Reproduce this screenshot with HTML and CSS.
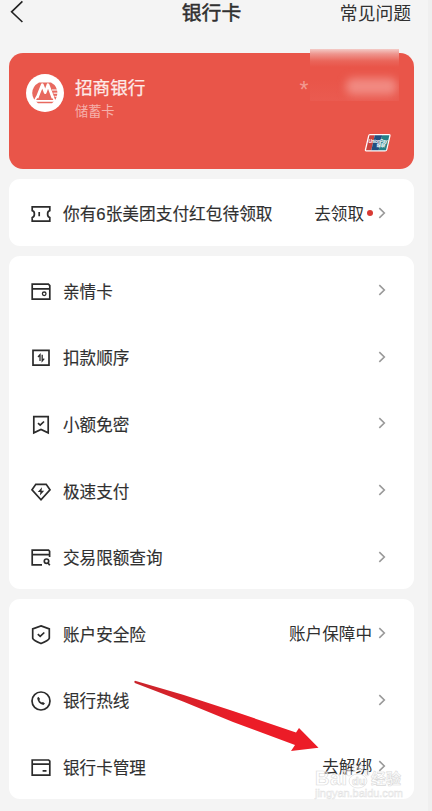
FILE: index.html
```html
<!DOCTYPE html>
<html lang="zh-CN">
<head>
<meta charset="utf-8">
<title>银行卡</title>
<link rel="stylesheet" href="styles.css">
</head>
<body>
<svg class="defs" width="0" height="0" aria-hidden="true">
  <symbol id="chevron" viewBox="0 0 8 12"><path d="M1.3 1.2 6.3 6 1.3 10.8"/></symbol>
</svg>
<main class="page">
  <header class="topbar">
    <svg class="back" viewBox="0 0 14 24"><path d="M12.4 1.4 1.6 11.8 12.4 22"/></svg>
    <h1 class="title">银行卡</h1>
    <a class="faq">常见问题</a>
  </header>

  <section class="bank-card">
    <svg class="bank-logo" viewBox="0 0 38 38">
      <circle cx="19" cy="19" r="19" fill="#fff"/>
      <path d="M13 8.4H25Q31.4 12 31.4 19 31 25.5 26 29.2H12Q6.4 25 6.2 19 6.5 12 13 8.4Z" fill="#e8695f"/>
      <path d="M11 24 16.3 10.8 19.2 18.6 22 10.8 27 24" class="logo-line"/>
      <path d="M11 22.5 8.6 26.9H28.8L26.6 22.5" class="logo-base"/>
      <path d="M26 16H33M27.5 19.2H33M28.5 22.4H33" class="logo-bar"/>
    </svg>
    <div class="bank-info">
      <div class="bank-name">招商银行</div>
      <div class="bank-type">储蓄卡</div>
    </div>
    <span class="mask-star">*</span>
    <div class="mask"><i class="mask-glow"></i></div>
    <svg class="unionpay" viewBox="0 0 28 20">
      <path d="M6 1H25.2Q27 1 26.6 2.8L23.4 16.6Q23 18.5 21 18.5H2.2Q.4 18.5.8 16.7L4 2.9Q4.4 1 6 1Z" fill="#fff"/>
      <path d="M5.5 2.3H10.8L7.3 17.2H2Z" fill="#c9433f"/>
      <path d="M10.8 2.3H18.2L14.7 17.2H7.3Z" fill="#224f80"/>
      <path d="M18.2 2.3H25.4L22 17.2H14.7Z" fill="#258087"/>
      <text x="4.5" y="10" class="up-text" textLength="19">UnionPay</text>
      <text x="12" y="14.2" class="up-text" textLength="9">银联</text>
    </svg>
  </section>

  <section class="group coupon">
    <div class="row">
      <svg class="icon" viewBox="0 0 20 20"><path d="M1.2 2.8H18.8V6.6Q16.6 7 16.6 10T18.8 13.6V17.2H1.2V13.6Q3.4 13 3.4 10T1.2 6.6ZM8.2 8V12.2"/></svg>
      <span class="label">你有6张美团支付红包待领取</span>
      <span class="value">去领取</span><i class="dot"></i>
      <svg class="chevron"><use href="#chevron"/></svg>
    </div>
  </section>

  <section class="group">
    <div class="row">
      <svg class="icon" viewBox="0 0 20 20"><path d="M1.2 2.2H17.4L18.8 3.6V17.2H1.2ZM1.2 6.9H18.8"/><circle cx="13.2" cy="11.8" r="1.8" class="thin"/></svg>
      <span class="label">亲情卡</span><svg class="chevron"><use href="#chevron"/></svg>
    </div>
    <div class="row">
      <svg class="icon" viewBox="0 0 20 20"><path d="M2 2.3H18V17.2H2Z"/><path d="M9 13V6.8L7 9M11.2 6.8V13L13.2 10.6" class="thin"/></svg>
      <span class="label">扣款顺序</span><svg class="chevron"><use href="#chevron"/></svg>
    </div>
    <div class="row">
      <svg class="icon" viewBox="0 0 20 20"><path d="M2.8 1.7H17.2V17.8L10 14.4 2.8 17.8ZM7 8.2 9.2 10.2 13 6.5"/></svg>
      <span class="label">小额免密</span><svg class="chevron"><use href="#chevron"/></svg>
    </div>
    <div class="row">
      <svg class="icon" viewBox="0 0 20 20"><path d="M4.8 2.3H15.2L19 7.8 10 17.8 1 7.8Z"/><path d="M11 5.2 6.8 10H9.4L8.9 13.6 13.2 8.7H10.5Z" class="solid"/></svg>
      <span class="label">极速支付</span><svg class="chevron"><use href="#chevron"/></svg>
    </div>
    <div class="row">
      <svg class="icon" viewBox="0 0 20 20"><path d="M11 16.9H1.2V2.1H17.5L18.6 3.3V9M1.2 6.7H18.6"/><circle cx="15.5" cy="13.2" r="2.2"/><path d="M17 15 18.8 17.3"/></svg>
      <span class="label">交易限额查询</span><svg class="chevron"><use href="#chevron"/></svg>
    </div>
  </section>

  <section class="group">
    <div class="row">
      <svg class="icon" viewBox="0 0 20 20"><path d="M10 .9 18.3 3.9V13.3Q17.8 15.3 10 18.5 2.2 15.3 1.7 13.3V3.9ZM6.8 9.2 9.2 11.4 13.3 7.5"/></svg>
      <span class="label">账户安全险</span><span class="value">账户保障中</span><svg class="chevron"><use href="#chevron"/></svg>
    </div>
    <div class="row">
      <svg class="icon" viewBox="0 0 20 20"><circle cx="10" cy="10" r="9"/><path d="M7.4 5.7 6.2 7Q6.5 12.4 12.4 14L14 12.6 12 10.9 10.8 11.6Q9 10.6 8.3 9.1L9.1 8.1Z" class="solid"/></svg>
      <span class="label">银行热线</span><svg class="chevron"><use href="#chevron"/></svg>
    </div>
    <div class="row">
      <svg class="icon" viewBox="0 0 20 20"><path d="M1.2 2H17.6L18.8 3.2V17.1H1.2ZM1.2 6.1H18.8M11.6 12.9H15.5"/></svg>
      <span class="label">银行卡管理</span><span class="value">去解绑</span><svg class="chevron"><use href="#chevron"/></svg>
    </div>
  </section>

  <svg class="arrow" viewBox="0 0 190 75">
    <defs><linearGradient id="red" x1="0" y1="0" x2="1" y2="0"><stop offset="0" stop-color="#c9252c"/><stop offset=".6" stop-color="#ec1c27"/></linearGradient></defs>
    <path d="M2 .8 50 14.8 100 31 163 52.5 166 48 185.5 67.8 158 71 162 65 100 42 50 21.5 1.8 3Q.8 1.5 2 .8Z" fill="url(#red)"/>
  </svg>
  <svg class="watermark" viewBox="0 0 100 50">
    <text x="1" y="30" class="wm-main" textLength="32">Bai</text>
    <ellipse cx="44" cy="26" rx="9" ry="7"/><ellipse cx="35" cy="18" rx="2.2" ry="3"/><ellipse cx="41" cy="13" rx="2.2" ry="3.2"/><ellipse cx="47" cy="13" rx="2.2" ry="3.2"/><ellipse cx="53" cy="18" rx="2.2" ry="3"/>
    <text x="38" y="30" class="wm-du">du</text>
    <text x="57" y="29" class="wm-cn" textLength="30">经验</text>
    <text x="1" y="42" class="wm-url" textLength="88">jingyan.baidu.com</text>
  </svg>
</main>
</body>
</html>
```
FILE: styles.css
```css
* { box-sizing: border-box; }

body {
  margin: 0;
  background: #f4f4f4;
  color: #303030;
  font-family: "Noto Sans CJK SC", sans-serif;
}

.defs { position: absolute; }

.page {
  position: relative;
  width: 432px;
  height: 811px;
  padding: 0 14px 0 9px;
  border-right: 4px solid #efefef;
  overflow: hidden;
}

.topbar {
  display: grid;
  grid-template-columns: 110px 1fr 110px;
  align-items: center;
  height: 24px;
  margin-bottom: 29px;
  width: 405px;
}

.back { width: 14px; height: 24px; margin-left: 1px; fill: none; stroke: #222; stroke-width: 1.6; }

.title {
  margin: 0;
  text-align: center;
  font-size: 19.8px;
  line-height: 24px;
  font-weight: 400;
  -webkit-text-stroke: .5px #303030;
}

.faq { font-size: 17.8px; line-height: 24px; text-align: right; padding-right: 3px; }

.bank-card {
  position: relative;
  display: flex;
  width: 405px;
  height: 116px;
  padding: 21px 17px;
  border-radius: 14px;
  background: #e95549;
  color: #fdeae8;
}

.bank-logo { width: 38px; height: 38px; margin-right: 11px; }
.logo-line { fill: none; stroke: #fff; stroke-width: 2.8; stroke-linejoin: round; }
.logo-base { fill: none; stroke: #fff; stroke-width: 1.8; stroke-linejoin: round; }
.logo-bar { stroke: #fff; stroke-width: 1.4; opacity: .7; }

.bank-name { font-size: 17.6px; line-height: 26px; -webkit-text-stroke: .25px #fdeae8; }
.bank-type { padding-top: 1px; font-size: 13.2px; line-height: 20px; color: #f5b0aa; }

.mask-star { position: absolute; left: 290.5px; top: 24px; font: 23px/26px "Liberation Sans", sans-serif; color: #f29990; }

.mask {
  position: absolute;
  left: 301px;
  top: -4px;
  width: 89px;
  height: 52px;
  overflow: hidden;
  background: linear-gradient(#f3cbc7 0, #ee958e 5px, #ea655a 12px, #e95549 18px, #e95549 30px, #ea5b50 100%);
}

.mask-glow {
  position: absolute;
  left: 36px;
  top: 29px;
  width: 51px;
  height: 17px;
  border-radius: 7px;
  background: #f18a82;
  filter: blur(4px);
}

.unionpay { position: absolute; left: 355px; top: 80px; width: 28px; height: 20px; }
.up-text { fill: #fff; font: italic bold 4.5px "Liberation Sans", "Noto Sans CJK SC", sans-serif; }

.group {
  width: 405px;
  margin-top: 10px;
  border-radius: 11px;
  background: #fff;
}

.row { display: flex; align-items: center; height: 66.6px; padding: 0 28px 0 22px; }
.coupon .row { height: 67px; }

.icon {
  flex: none;
  width: 20px;
  height: 20px;
  margin: 5px 12px 0 0;
  fill: none;
  stroke: #2b2b2b;
  stroke-width: 1.7;
}

.coupon .icon { margin-top: 3px; }
.icon .thin { stroke-width: 1.3; }
.icon .solid { fill: #2b2b2b; stroke: none; }

.label { margin-right: auto; padding-top: 7px; font-family: "Liberation Sans", "Noto Sans CJK SC", sans-serif; font-size: 16.6px; line-height: 24px; white-space: nowrap; -webkit-text-stroke: .15px #303030; }
.coupon .label { padding-top: 5px; font-size: 16.7px; }
.value { padding-top: 1px; font-size: 16.6px; line-height: 24px; margin-right: 6px; }
.coupon .value { padding-top: 0; }
.dot { width: 6px; height: 6px; margin: 1px 6px 0 -4px; border-radius: 50%; background: #d83a34; }
.chevron { flex: none; width: 8px; height: 12px; margin-top: 2px; fill: none; stroke: #999; stroke-width: 1.6; }
.coupon .chevron { margin-top: 0; }

.coupon .dot { margin-left: -3px; margin-right: 5px; }

.arrow { position: absolute; left: 133px; top: 680px; width: 190px; height: 75px; }

.watermark {
  position: absolute;
  left: 314px;
  top: 755px;
  width: 100px;
  height: 50px;
  overflow: visible;
  fill: #fff;
  fill-opacity: .55;
  stroke: #d9d9d9;
  stroke-width: .6;
}

.wm-main { font: bold 20px "Liberation Sans", sans-serif; }
.wm-du { font: bold 11px "Liberation Sans", sans-serif; }
.wm-cn { font: bold 15px "Noto Sans CJK SC", sans-serif; }
.wm-url { font: 11px "Liberation Sans", sans-serif; stroke: #e2e2e2; stroke-width: .5; }
```
